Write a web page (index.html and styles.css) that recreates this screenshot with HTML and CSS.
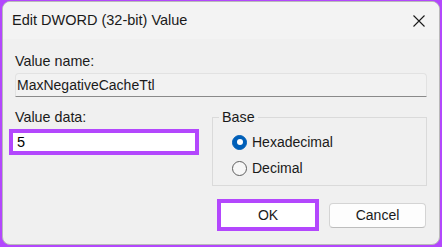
FILE: index.html
```html
<!DOCTYPE html>
<html lang="en">
<head>
<meta charset="utf-8">
<title>Edit DWORD (32-bit) Value</title>
<link rel="stylesheet" href="styles.css">
</head>
<body>
<div class="dialog">
  <div class="titlebar">
    <span class="title">Edit DWORD (32-bit) Value</span>
    <svg class="close" width="12" height="12" viewBox="0 0 12 12" aria-label="Close">
      <path d="M0.5 0.5 L11.5 11.5 M11.5 0.5 L0.5 11.5" stroke="#1a1a1a" stroke-width="1.1" fill="none"/>
    </svg>
  </div>
  <div class="content">
    <div class="label">Value name:</div>
    <div class="namebox">MaxNegativeCacheTtl</div>
    <div class="row">
      <div class="left">
        <div class="label">Value data:</div>
        <div class="databox">5</div>
      </div>
      <fieldset class="base">
        <legend>Base</legend>
        <div class="radio-row"><span class="radio checked"></span><span>Hexadecimal</span></div>
        <div class="radio-row"><span class="radio"></span><span>Decimal</span></div>
      </fieldset>
    </div>
    <div class="buttons">
      <div class="btn ok">OK</div>
      <div class="btn cancel">Cancel</div>
    </div>
  </div>
</div>
</body>
</html>
```
FILE: styles.css
```css
html, body {
  margin: 0;
  padding: 0;
}
body {
  width: 442px;
  height: 247px;
  box-sizing: border-box;
  padding: 1px 2px 2px 2px;
  background: #b347fd;
  display: flex;
  font-family: "Liberation Sans", Arial, sans-serif;
  font-size: 14px;
  color: #000;
}
.dialog {
  flex: 1;
  border: 1px solid #b9b9b9;
  border-radius: 8px;
  background: #f0f0f0;
  overflow: hidden;
  display: flex;
  flex-direction: column;
}
.titlebar {
  height: 37px;
  flex: 0 0 37px;
  background: #f3f3f3;
  display: flex;
  align-items: center;
  justify-content: space-between;
  padding: 0 14px 0 9px;
}
.title {
  font-size: 14.5px;
  line-height: 17px;
  color: #1a1a1a;
}
.close {
  display: block;
}
.content {
  padding: 14px 12px 0 12px;
  display: flex;
  flex-direction: column;
}
.label {
  line-height: 17px;
  font-size: 14.3px;
  color: #1a1a1a;
}
.namebox {
  margin-top: 3px;
  height: 24px;
  box-sizing: border-box;
  border: 1px solid #e2e2e2;
  border-bottom-color: #8a8a8a;
  border-radius: 4px 4px 0 0;
  background: #f2f2f2;
  padding-left: 1px;
  line-height: 22px;
  color: #1a1a1a;
}
.row {
  margin-top: 12px;
  display: flex;
  align-items: flex-start;
}
.left {
  flex: 0 0 184px;
  display: flex;
  flex-direction: column;
}
.databox {
  margin-top: 3px;
  margin-left: -6px;
  width: 190px;
  height: 26px;
  box-sizing: border-box;
  border: 4px solid #b347fd;
  background: #fff;
  padding-left: 4px;
  line-height: 18px;
  font-size: 14.5px;
}
.base {
  flex: 1;
  margin: 0 0 0 13px;
  padding: 3px 0 4px 6px;
  border: 1px solid #dadada;
  min-width: 0;
}
.base legend {
  padding: 0 3px;
  line-height: 17px;
  font-size: 14.3px;
  color: #1a1a1a;
}
.radio-row {
  height: 26px;
  display: flex;
  align-items: center;
  gap: 5px;
  padding-left: 13px;
  color: #1a1a1a;
}
.radio {
  width: 15px;
  height: 15px;
  box-sizing: border-box;
  border-radius: 50%;
  border: 1px solid #5f5f5f;
  background: #f7f7f7;
  display: flex;
  align-items: center;
  justify-content: center;
}
.radio.checked {
  border-color: #005fb8;
  background: #005fb8;
}
.radio.checked::after {
  content: "";
  width: 6px;
  height: 6px;
  border-radius: 50%;
  background: #fff;
}
.buttons {
  margin-top: 13px;
  display: flex;
  justify-content: flex-end;
  align-items: center;
  gap: 10px;
  padding-right: 1px;
}
.btn {
  box-sizing: border-box;
  display: flex;
  align-items: center;
  justify-content: center;
  color: #1a1a1a;
  background: #fdfdfd;
}
.ok {
  width: 102px;
  height: 32px;
  border: 4px solid #b347fd;
  background: #fff;
}
.cancel {
  width: 97px;
  height: 25px;
  border: 1px solid #d4d4d4;
  border-bottom-color: #bdbdbd;
  border-radius: 4px;
}
```
